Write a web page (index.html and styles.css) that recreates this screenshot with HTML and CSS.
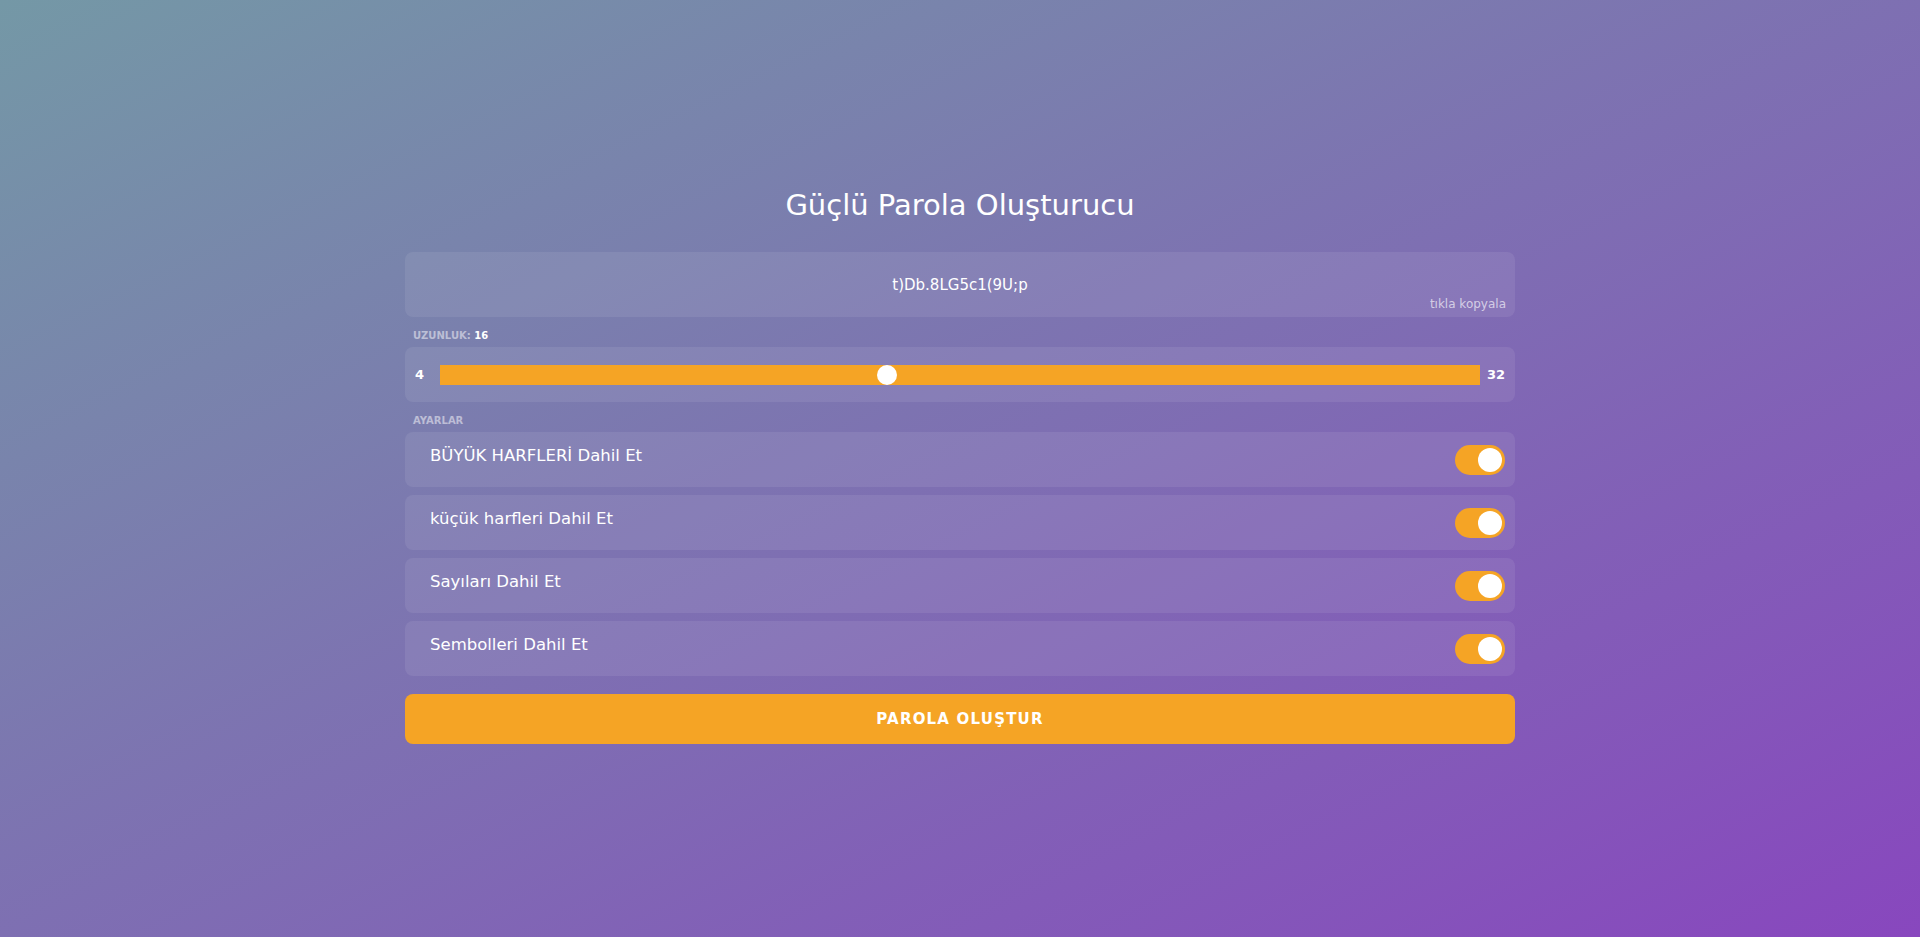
FILE: index.html
```html
<!DOCTYPE html>
<html lang="tr">
<head>
    <meta charset="UTF-8">
    <title>Güçlü Parola Oluşturucu</title>
    <link rel="stylesheet" href="styles.css">
</head>
<body>

<div class="container">
    <h2>Güçlü Parola Oluşturucu</h2>

    <!-- sonuç -->
    <div class="result" id="result" onclick="copyPassword()">
        <span id="password">t)Db.8LG5c1(9U;p</span>
        <small class="copy-hint">tıkla kopyala</small>
    </div>

    <div class="field-title">Uzunluk: <span id="lengthValue">16</span></div>
    <div class="range-box">
        <span class="range-min">4</span>
        <input type="range" id="length" min="4" max="32" value="16" oninput="updateLength(this)">
        <span class="range-max">32</span>
    </div>

    <div class="field-title">Ayarlar</div>
    <div class="settings">
        <div class="setting">
            <span class="setting-label">BÜYÜK HARFLERİ Dahil Et</span>
            <label class="switch">
                <input type="checkbox" id="upper" checked>
                <span class="slider"></span>
            </label>
        </div>
        <div class="setting">
            <span class="setting-label">küçük harfleri Dahil Et</span>
            <label class="switch">
                <input type="checkbox" id="lower" checked>
                <span class="slider"></span>
            </label>
        </div>
        <div class="setting">
            <span class="setting-label">Sayıları Dahil Et</span>
            <label class="switch">
                <input type="checkbox" id="number" checked>
                <span class="slider"></span>
            </label>
        </div>
        <div class="setting">
            <span class="setting-label">Sembolleri Dahil Et</span>
            <label class="switch">
                <input type="checkbox" id="symbol" checked>
                <span class="slider"></span>
            </label>
        </div>
    </div>

    <button class="btn-generate" onclick="generatePassword()">Parola Oluştur</button>
</div>

<script>
    // uzunluk değerini göster
    function updateLength(input) {
        document.getElementById('lengthValue').innerText = input.value;
    }

    // yeni parola üret
    function generatePassword() {
        let chars = '';
        if (document.getElementById('upper').checked) chars += 'ABCDEFGHIJKLMNOPQRSTUVWXYZ';
        if (document.getElementById('lower').checked) chars += 'abcdefghijklmnopqrstuvwxyz';
        if (document.getElementById('number').checked) chars += '0123456789';
        if (document.getElementById('symbol').checked) chars += '!@#$%^&*(){}[]=<>/,.;:';
        if (!chars) return;

        let length = document.getElementById('length').value;
        let password = '';
        for (let i = 0; i < length; i++) {
            password += chars[Math.floor(Math.random() * chars.length)];
        }
        document.getElementById('password').innerText = password;
    }

    // panoya kopyala
    function copyPassword() {
        let text = document.getElementById('password').innerText;
        if (navigator.clipboard) navigator.clipboard.writeText(text);
    }
</script>

</body>
</html>
```

FILE: styles.css
```css
html {
    height: 100%;
}

body {
    font-family: 'DejaVu Sans', Arial, sans-serif;
    background: linear-gradient(to bottom right, #7498a6, #8847be);
    color: #fff;
    margin: 0;
    padding: 0 0 5px;
    min-height: 100vh;
    box-sizing: border-box;
    display: flex;
    align-items: center;
    justify-content: center;
}

.container {
    width: 1110px;
}

h2 {
    font-size: 29px;
    font-weight: normal;
    line-height: 34px;
    text-align: center;
    margin: 0 0 30px;
}

.result {
    position: relative;
    height: 65px;
    background-color: rgba(255,255,255,0.08);
    border-radius: 8px;
    display: flex;
    align-items: center;
    justify-content: center;
    font-size: 15px;
    cursor: pointer;
}

.copy-hint {
    position: absolute;
    right: 9px;
    bottom: 6px;
    font-size: 12px;
    line-height: 14px;
    color: rgba(255,255,255,0.65);
}

.field-title {
    font-size: 10px;
    font-weight: bold;
    line-height: 13px;
    text-transform: uppercase;
    color: rgba(255,255,255,0.5);
    margin: 12px 0 5px 8px;
}

.field-title span {
    color: #fff;
}

.range-box {
    height: 55px;
    box-sizing: border-box;
    padding: 0 10px;
    background-color: rgba(255,255,255,0.08);
    border-radius: 8px;
    display: flex;
    align-items: center;
    font-size: 13px;
    font-weight: bold;
}

.range-min,
.range-max {
    width: 25px;
}

.range-max {
    text-align: right;
}

.range-box input[type="range"] {
    -webkit-appearance: none;
    appearance: none;
    flex: 1;
    height: 20px;
    margin: 0;
    background-color: #f5a425;
    outline: none;
}

.range-box input[type="range"]::-webkit-slider-thumb {
    -webkit-appearance: none;
    width: 20px;
    height: 20px;
    border-radius: 50%;
    background-color: #fff;
    cursor: pointer;
}

.settings {
    display: flex;
    flex-direction: column;
    gap: 8px;
}

.setting {
    height: 55px;
    box-sizing: border-box;
    padding: 12px 10px 0 25px;
    background-color: rgba(255,255,255,0.08);
    border-radius: 8px;
    display: flex;
    justify-content: space-between;
    align-items: flex-start;
}

.setting-label {
    font-size: 16.5px;
    line-height: 24px;
}

.switch {
    position: relative;
    width: 50px;
    height: 30px;
    margin-top: 1px;
    cursor: pointer;
}

.switch input {
    opacity: 0;
    width: 0;
    height: 0;
}

.slider {
    position: absolute;
    top: 0;
    left: 0;
    right: 0;
    bottom: 0;
    background-color: rgba(255,255,255,0.3);
    border-radius: 15px;
    transition: 0.2s;
}

.slider:before {
    content: "";
    position: absolute;
    left: 3px;
    top: 3px;
    width: 24px;
    height: 24px;
    border-radius: 50%;
    background-color: #fff;
    transition: 0.2s;
}

.switch input:checked + .slider {
    background-color: #f5a425;
}

.switch input:checked + .slider:before {
    transform: translateX(20px);
}

.btn-generate {
    display: block;
    width: 100%;
    height: 50px;
    margin-top: 18px;
    border: none;
    border-radius: 8px;
    background-color: #f5a425;
    color: #fff;
    font-family: inherit;
    font-size: 15px;
    font-weight: bold;
    letter-spacing: 1.2px;
    text-transform: uppercase;
    cursor: pointer;
}

.btn-generate:hover {
    background-color: #e8961a;
}
```
